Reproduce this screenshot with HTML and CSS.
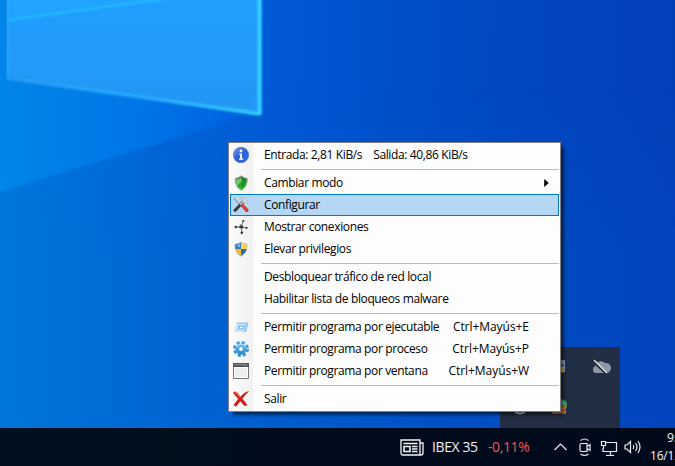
FILE: index.html
```html
<!DOCTYPE html>
<html lang="es">
<head>
<meta charset="utf-8">
<title>Escritorio</title>
<link rel="stylesheet" href="styles.css">
</head>
<body>
<div class="desktop">
  <svg class="wallpaper" viewBox="0 0 675 428" preserveAspectRatio="none" aria-hidden="true">
    <defs>
      <linearGradient id="base" gradientUnits="userSpaceOnUse" x1="0" y1="100" x2="675" y2="120">
        <stop offset="0" stop-color="#0078e0"/><stop offset=".2" stop-color="#0068da"/><stop offset=".4" stop-color="#0059d6"/><stop offset=".65" stop-color="#024bc6"/><stop offset="1" stop-color="#043fba"/>
      </linearGradient>
      <linearGradient id="low" x1="0" x2="1"><stop offset="0" stop-color="#0076da"/><stop offset=".35" stop-color="#005fd0"/><stop offset=".65" stop-color="#0050c8"/><stop offset="1" stop-color="#0344bd"/></linearGradient>
      <linearGradient id="fade" x1="0" x2="0" y1="0" y2="1"><stop offset=".2" stop-color="#000"/><stop offset=".6" stop-color="#fff"/></linearGradient>
      <mask id="m"><rect width="675" height="428" fill="url(#fade)"/></mask>
      <linearGradient id="beam" x1="0" x2="1" y1="0" y2="0"><stop offset="0" stop-color="#0086e8"/><stop offset=".5" stop-color="#0078e8"/><stop offset="1" stop-color="#005fdf"/></linearGradient>
      <linearGradient id="pane" x1="0" x2="0" y1="0" y2="1"><stop offset="0" stop-color="#209eff"/><stop offset="1" stop-color="#2496f4"/></linearGradient>
      <linearGradient id="edge" x1="0" x2="1"><stop offset="0" stop-color="#269cf5"/><stop offset=".6" stop-color="#28acff"/><stop offset="1" stop-color="#34d2ff"/></linearGradient>
      <filter id="soft" x="-10%" y="-10%" width="120%" height="120%"><feGaussianBlur stdDeviation=".8"/></filter>
    </defs>
    <rect width="675" height="428" fill="url(#base)"/>
    <rect width="675" height="428" fill="url(#low)" mask="url(#m)"/>
    <path d="M-4 -4H8V78L250 115L-4 193Z" fill="url(#beam)" filter="url(#soft)"/>
    <path d="M7 -2H261V114L7 78Z" fill="url(#pane)"/>
    <path d="M7 -2H175L7 20Z" fill="#20a4ff"/>
    <g fill="none" filter="url(#soft)">
      <path d="M8 20L165 -1" stroke="#20b8ff" stroke-width="2.500"/>
      <path d="M8 -2V78" stroke="#2da4f8" stroke-width="1.500"/>
      <path d="M7 78L260 114" stroke="url(#edge)" stroke-width="3.500"/>
      <path d="M259.500 -3V115" stroke="#31cbff" stroke-width="4.500"/>
    </g>
  </svg>

  <div class="tray-popup">
    <svg viewBox="0 0 120 81" width="120" height="81" aria-hidden="true">
      <path d="M58 13h7v12h-7z" fill="#8fa3bd"/><path d="M58 15l6 3-2 4h-4z" fill="#31507e"/><path d="M57 20h3l1-3 1 3h3l-2 2 1 4-3-1-3 1z" fill="#f7b52b"/>
      <path d="M95 26a4 4 0 0 1 0-7 6 6 0 0 1 10-3 4 4 0 0 1 2 10z" fill="#8e96a4"/><path d="M93 14l14 13" stroke="#222e43" stroke-width="3"/><path d="M94 13l13 13" stroke="#f5f5f5" stroke-width="1.200"/>
      <path d="M14 64q6 5 12 0" stroke="#cdd1d6" stroke-width="2" fill="none"/>
      <circle cx="61" cy="58" r="6" fill="#43ae45"/><path d="M60 53l5 2-2 4z" fill="#56b7e0"/><path d="M52 57h9v2h5v8H52z" fill="#bb5d2e"/><path d="M52 61h14M52 65h14M56 57v4M62 61v4M57 65v2" stroke="#efb375" stroke-width=".7"/>
    </svg>
  </div>

  <ul class="menu">
    <li class="item">
      <svg class="icon" viewBox="0 0 16 16"><defs><linearGradient id="ib" x1="0" y1="0" x2="1" y2="1"><stop stop-color="#79a8f2"/><stop offset=".45" stop-color="#3060d0"/><stop offset="1" stop-color="#2f6fe2"/></linearGradient></defs><circle cx="8" cy="8" r="7.700" fill="url(#ib)" stroke="#3866bd" stroke-width=".6"/><circle cx="8" cy="4" r="1.400" fill="#fff"/><path d="M6 6.500h3v5h1.200v1.200H6v-1.200h1.200V7.600H6z" fill="#fff"/></svg>
      <span class="label"><span class="t1">Entrada: 2,81 KiB/s</span><span class="t2">Salida: 40,86 KiB/s</span></span>
    </li>
    <li class="sep"></li>
    <li class="item">
      <svg class="icon" viewBox="0 0 16 16"><defs><linearGradient id="sg" x1="0" y1="0" x2="0" y2="1"><stop stop-color="#196c24"/><stop offset="1" stop-color="#2ec51f"/></linearGradient></defs><path d="M2 3.500Q6 3 8 .8Q11 3 14.300 3.500Q14.500 12 8.300 15.400Q2 12 2 3.500Z" fill="url(#sg)" stroke="#aab4aa" stroke-width="1"/><path d="M3 4.500Q6.500 4 8 2L9 6 4 11Q3 8 3 4.500Z" fill="#a5dca6" opacity=".65"/><path d="M9 7l4-2-1 5-3 3z" fill="#159820"/></svg>
      <span class="label">Cambiar modo</span><svg class="arrow" viewBox="0 0 4 7"><path d="M0 0L4 3.500L0 7Z"/></svg>
    </li>
    <li class="item selected">
      <svg class="icon" viewBox="0 0 16 16"><path d="M1 1l7 8" stroke="#8d9297" stroke-width="1.500"/><path d="M2 1l5 6" stroke="#eee" stroke-width=".6"/><path d="M11 4L1.200 14.300" stroke="#303740" stroke-width="3"/><path d="M7 8l4-4" stroke="#b8bec4" stroke-width="2"/><path d="M7.500 8.500l2-2 6 6q.3 2.800-2.500 2.600z" fill="#cf281c"/><path d="M9 8l5 5.500" stroke="#ff7969" stroke-width=".8"/><path d="M7.500 1q4.500-1 5.500 2l2.500 2L14 6.500 12 5l-1 1-2-2 1-1z" fill="#d9dfe4" stroke="#8f9ba6" stroke-width=".5"/></svg>
      <span class="label">Configurar</span>
    </li>
    <li class="item">
      <svg class="icon" viewBox="0 0 16 16"><path d="M8.500 8L10 2.500M8 8H3M8.500 8l.3 6M8 8l6 .8M9 8L7 5" stroke="#777" stroke-width="1"/><g fill="#333"><circle cx="8.600" cy="8" r="1.700"/><circle cx="10.300" cy="2" r="1.100"/><circle cx="2.800" cy="8" r="1.200"/><circle cx="6.200" cy="8" r=".8"/><circle cx="13.500" cy="8.800" r="1.100"/><circle cx="8.800" cy="13.800" r="1.300"/></g></svg>
      <span class="label">Mostrar conexiones</span>
    </li>
    <li class="item">
      <svg class="icon" viewBox="0 0 16 16"><path d="M8 .5Q11 2.500 14.500 2.800Q15 12 8 15.700Q1 12 1.500 2.800Q5 2.500 8 .5Z" fill="#b9c6d1"/><path d="M8 1.500V8H2.300V3.600Q5.500 3.400 8 1.500Z" fill="#3478b5"/><path d="M8 1.500Q10.500 3.400 13.700 3.600V8H8Z" fill="#ffd252"/><path d="M2.300 8H8v6.800Q3 12 2.300 8Z" fill="#f1ba38"/><path d="M8 8h5.700Q13 12 8 14.800Z" fill="#376daa"/><path d="M3 4.500q3 0 4-2v4z" fill="#90bad9"/></svg>
      <span class="label">Elevar privilegios</span>
    </li>
    <li class="sep"></li>
    <li class="item"><span class="icon"></span><span class="label">Desbloquear tráfico de red local</span></li>
    <li class="item"><span class="icon"></span><span class="label">Habilitar lista de bloqueos malware</span></li>
    <li class="sep"></li>
    <li class="item">
      <svg class="icon" viewBox="0 0 16 16"><path d="M4 3.500H15.500L13 13H.8Z" fill="#cde4f6"/><path d="M4 3.500H15.500L15 5H3.500Z" fill="#9cc8ee"/><path d="M15 5L13 13h-2L13 5Z" fill="#8fc3ee"/><path d="M5.500 6.500H12l-1 4H4.500Z" fill="#7fbcec"/><path d="M7 7.800h3.200l-.4 1.400H6.600z" fill="#eef8ff"/></svg>
      <span class="label">Permitir programa por ejecutable</span><span class="key">Ctrl+Mayús+E</span>
    </li>
    <li class="item">
      <svg class="icon" viewBox="0 0 16 16"><defs><linearGradient id="gg" x1="0" y1="0" x2="0" y2="1"><stop stop-color="#80c8ef"/><stop offset="1" stop-color="#2384cb"/></linearGradient></defs><circle cx="8" cy="8" r="6.500" fill="none" stroke="#3a99dc" stroke-width="3" stroke-dasharray="3 2.105"/><circle cx="8" cy="8" r="5.800" fill="url(#gg)"/><path d="M3.500 6a5 5 0 0 1 9 0" stroke="#a9ddf8" fill="none"/><circle cx="8" cy="8" r="2.200" fill="#f8fcff" stroke="#3f96cf" stroke-width=".5"/></svg>
      <span class="label">Permitir programa por proceso</span><span class="key">Ctrl+Mayús+P</span>
    </li>
    <li class="item">
      <svg class="icon" viewBox="0 0 16 16"><path d="M.5.500h15v15H.5z" fill="#eee" stroke="#777"/><path d="M0 0h16v4H0z" fill="#555"/><path d="M1 1h10v1H1z" fill="#888"/><path d="M11 2h1m1 0h1" stroke="#ddd"/><path d="M1.500 4.500h13v10h-13z" fill="none" stroke="#fff"/></svg>
      <span class="label">Permitir programa por ventana</span><span class="key">Ctrl+Mayús+W</span>
    </li>
    <li class="sep"></li>
    <li class="item">
      <svg class="icon" viewBox="0 0 16 16"><path d="M.5 2Q1 0 4 1.500L7.500 6Q11 1.500 15.500.4Q12 3.500 9.200 7.700Q12 11 14 14L11.500 14.800L7.200 9.800L3.500 15Q1 15.500 1.200 13.500L5.500 8Z" fill="#d71b10" stroke="#9f1712" stroke-width=".5"/><path d="M2 2q1-1 2 .5l3 4" stroke="#ff8e82" fill="none"/></svg>
      <span class="label">Salir</span>
    </li>
  </ul>
</div>

<footer class="taskbar">
  <svg class="news" viewBox="0 0 24 17" fill="none" stroke="#f3f3f3" stroke-width="1.300"><path d="M1 1h19v15H3q-2 0-2-2zM20 4h3v10q0 2-2 2h-2"/><path d="M4 7.500h6v5H4z" stroke-width="1.600"/><path d="M3.500 4.500h14M12 7.500h5.500M12 10h5.500M12 12.500h5.500"/></svg>
  <span class="ticker">IBEX 35</span><span class="change">-0,11%</span>
  <svg class="system" viewBox="0 0 88 20" fill="none" stroke="#ededed" stroke-width="1.200">
    <path d="M1.500 13l6-6 6 6"/>
    <path d="M28.500 6.500h5.500v8h-5.500q-1.500 0-1.500-1.500V8q0-1.500 1.500-1.500zM34 9.500l3-2v6L34 11.500M27.500 3.500q4-3 8 0M27.500 17q4 3 8 0"/>
    <path d="M53 5.500h10.500v9H50V11M57.500 15v3M53 18.500h8M48.500 4.500h4v4h-4zM50.500 8.500v3"/>
    <path d="M72 8h2l3.500-3.500v11L74 12h-2zM80 8q1.500 2 0 4M82.500 6q3 4 0 8M85 4q4 6 0 12"/>
  </svg>
  <div class="clock"><span class="time">9:</span><span>16/12</span></div>
</footer>
</body>
</html>
```

FILE: styles.css
```css
* { box-sizing: border-box; }
body {
  margin: 0;
  width: 675px;
  height: 466px;
  overflow: hidden;
  display: flex;
  flex-direction: column;
  font: 12px/20px "Open Sans", "Noto Sans", sans-serif;
  color: #000;
}
.desktop { position: relative; height: 428px; flex: none; }
.wallpaper { display: block; width: 675px; height: 428px; }
.tray-popup {
  position: absolute;
  left: 500px;
  top: 347px;
  width: 120px;
  height: 81px;
  background: #222e43;
}
.menu {
  position: absolute;
  left: 228px;
  top: 142px;
  width: 333px;
  margin: 0;
  padding: 1px;
  list-style: none;
  border: 1px solid #808080;
  background: linear-gradient(90deg, #fcfcfc, #f0f0f0 24px, #fdfdfd 24px);
  box-shadow: 4px 4px 3px -1px rgba(0, 0, 0, .55);
}
.item {
  display: flex;
  align-items: center;
  height: 22px;
  padding: 0 29px 0 2px;
  border: 1px solid transparent;
  white-space: nowrap;
  letter-spacing: -.37px;
}
.selected { background: #b5d7f3; border-color: #0078d7; }
.icon { width: 16px; height: 16px; flex: none; }
.label { flex: 1; margin-left: 15px; }
.key { letter-spacing: -.05px; }
.t1 { margin-right: 11px; }
.arrow { width: 5px; height: 8px; margin-right: -20px; }
.sep { height: 6px; padding: 3px 0 0 31px; }
.sep::before { content: ""; display: block; height: 1px; background: #bdbdbd; }
.taskbar {
  display: flex;
  align-items: center;
  height: 38px;
  padding-left: 400px;
  background: linear-gradient(90deg, #00101e, #010b1b 60%, #020a1a);
  color: #f2f2f2;
}
.news { width: 24px; height: 17px; flex: none; }
.ticker { margin-left: 8px; width: 56px; flex: none; font-size: 14px; letter-spacing: -.4px; }
.change { width: 64px; flex: none; color: #e8595c; font-size: 14px; letter-spacing: -.4px; }
.system { width: 88px; height: 20px; flex: none; margin-left: 1px; }
.clock {
  display: flex;
  flex-direction: column;
  flex: none;
  width: 25px;
  overflow: hidden;
  margin-left: 9px;
  line-height: 18px;
  letter-spacing: -.2px;
}
.time { margin-left: 17px; }
```
